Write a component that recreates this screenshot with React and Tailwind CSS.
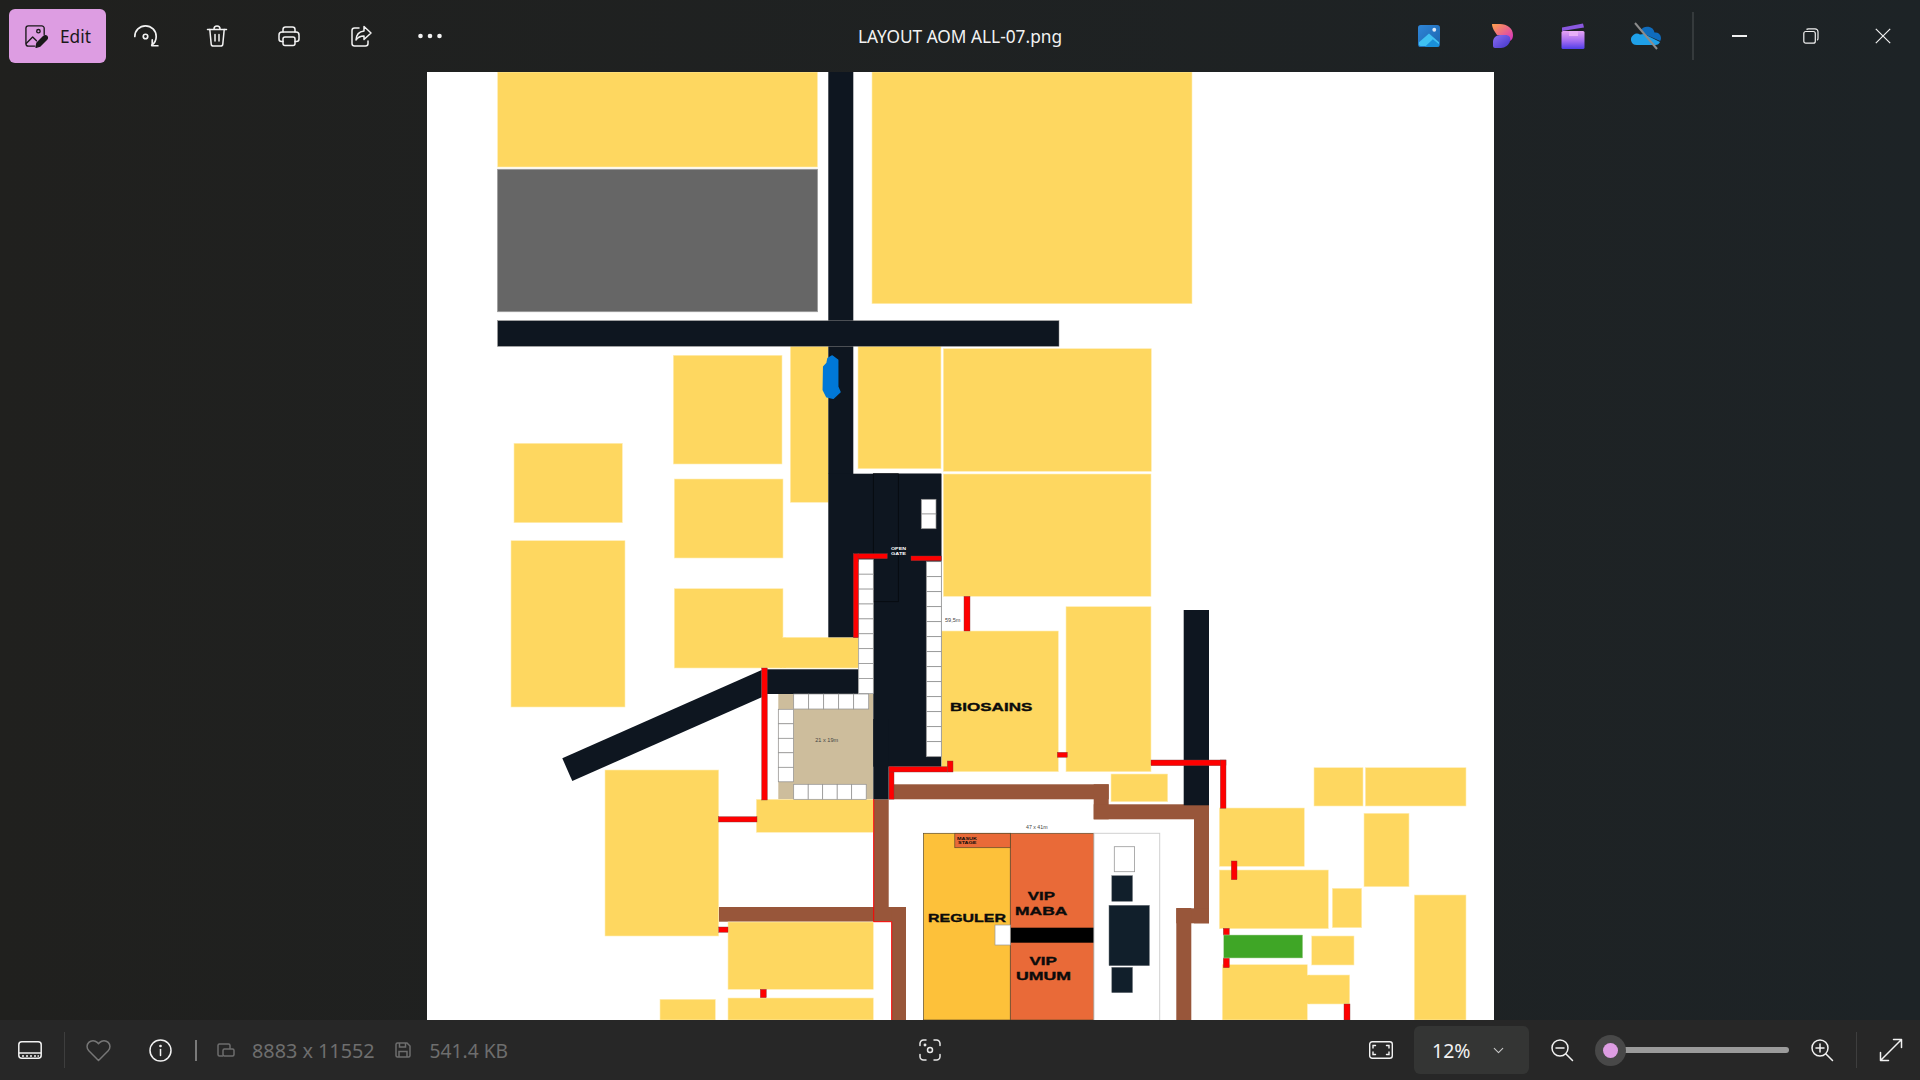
import { ChevronDown } from "lucide-react";

const font = { fontFamily: '"Noto Sans", "Open Sans", sans-serif' };

// floor plan shapes in screen pixels: [x1, y1, x2, y2]
const YELLOW = [
  [497.6, 72, 817.5, 167],
  [872, 72, 1192, 303.7],
  [673.3, 355.3, 782, 464],
  [790.3, 346, 828.3, 502.3],
  [858, 346, 941, 468.7],
  [943.3, 348.7, 1151.3, 471.3],
  [943.3, 474, 1151, 596.3],
  [514, 443.3, 622.3, 522.7],
  [511, 540.7, 625, 707],
  [674.3, 479, 783, 558],
  [674.3, 588.7, 783, 668],
  [783, 637.3, 858.3, 668],
  [756.3, 799.3, 873.7, 832.3],
  [605, 770, 718.7, 936],
  [728, 922, 873.3, 989.3],
  [728, 998, 873.3, 1020],
  [660, 999.3, 715.3, 1020],
  [941.7, 631, 1058.3, 771.7],
  [1066, 606.7, 1151, 771.7],
  [1111, 774, 1167.7, 801.7],
  [1314, 767.7, 1363, 806],
  [1365.3, 767.7, 1466, 806],
  [1364, 813.3, 1409, 886.7],
  [1219.3, 808, 1304.3, 866.3],
  [1219.3, 870, 1328.3, 928.7],
  [1332.3, 888.3, 1361.7, 927.7],
  [1414.3, 895, 1466, 1020],
  [1311.7, 936, 1354, 965],
  [1307.3, 975, 1349.7, 1004],
  [1222.3, 964.7, 1307.3, 1020],
];

// covers the light edge where two yellow blocks are really one
const SEAMS = [
  [780, 637.8, 786, 667.6],
  [1304, 975.4, 1310, 1003.6],
];

const BROWN = [
  [894, 784.3, 1108.7, 799.3],
  [1093.7, 784.3, 1108.7, 819.3],
  [1093.7, 804.3, 1209, 819.3],
  [1194, 805, 1209, 923.3],
  [1176.3, 908.3, 1209, 923.3],
  [1176.3, 908, 1191.3, 1020],
  [873.7, 799.3, 888.7, 907],
  [718.7, 907, 906, 921.7],
  [891.7, 907, 906, 1020],
];

const DARK = [
  [828.3, 72, 853.3, 474],
  [497.6, 320.7, 1059, 346.3],
  [828.3, 473.7, 858, 637.3],
  [858, 473.7, 941.3, 561.7],
  [873.3, 473.7, 941.3, 766.7],
  [873.3, 719, 888.7, 799.3],
  [766, 669.3, 858.3, 694],
  [1183.7, 610, 1209, 805.3],
];

const RED = [
  [853.3, 553.7, 858.3, 637.7],
  [858, 553.7, 887.3, 558.7],
  [911, 556, 941.3, 560.7],
  [761.7, 668, 767.3, 800],
  [718.3, 816.7, 757, 822],
  [718.7, 927, 728, 932.3],
  [760.3, 989.3, 766.3, 997.7],
  [964, 596.3, 970, 631],
  [1057.3, 752.3, 1067.3, 757.3],
  [1151, 760, 1226, 765.7],
  [1220.3, 760, 1226, 808.3],
  [889, 766.7, 894, 799.3],
  [889, 766.7, 947.3, 772],
  [947.3, 761, 953, 772],
  [1231.3, 861, 1237, 879.7],
  [1223.3, 928.3, 1229.3, 935],
  [1223.3, 958, 1229.3, 967.7],
  [1344, 1004, 1350, 1020],
];

// runs of small white booths
const CELLS = [
  { x: 858.7, y: 559.3, w: 14.6, h: 14.9, n: 9, down: true },
  { x: 926.3, y: 561.7, w: 15, h: 15, n: 13, down: true },
  { x: 921.3, y: 499.3, w: 14.7, h: 14.7, n: 2, down: true },
  { x: 793.7, y: 694, w: 15, h: 15, n: 5, down: false },
  { x: 778.3, y: 709.3, w: 15.2, h: 14.5, n: 5, down: true },
  { x: 793.7, y: 784.3, w: 14.5, h: 15, n: 5, down: false },
];

const Box = ({ r, ...rest }) => (
  <rect x={r[0]} y={r[1]} width={r[2] - r[0]} height={r[3] - r[1]} {...rest} />
);

const Label = ({ x, y, w, size, fill = "#0b0b0b", bold = true, children }) => (
  <text
    x={x}
    y={y}
    fontSize={size}
    fill={fill}
    textLength={w}
    lengthAdjust="spacingAndGlyphs"
    fontWeight={bold ? 700 : 400}
    stroke={bold && size > 5 ? fill : "none"}
    strokeWidth={bold && size > 5 ? 0.35 : 0}
    style={{ fontFamily: '"Liberation Sans", Arial, sans-serif' }}
  >
    {children}
  </text>
);

const FloorPlan = () => (
  <svg viewBox="427 72 1067 948" className="block h-[948px] w-[1067px] bg-white">
    {BROWN.map((r, i) => (
      <Box key={i} r={r} fill="#98563a" />
    ))}
    <Box r={[778.3, 694, 873.3, 799.3]} fill="#cdbd9c" />
    {YELLOW.map((r, i) => (
      <Box key={i} r={r} fill="#fed760" stroke="#ffedb5" strokeWidth="0.6" />
    ))}
    {SEAMS.map((r, i) => (
      <Box key={i} r={r} fill="#fed760" />
    ))}
    <Box r={[497.6, 169.3, 817.5, 311.7]} fill="#666666" stroke="#9a9a9a" strokeWidth="0.8" />
    {DARK.map((r, i) => (
      <Box key={i} r={r} fill="#0e1620" />
    ))}
    <polygon points="761.7,670 562.3,758.3 572.3,781 761.7,697.3" fill="#0e1620" />
    <Box r={[873.3, 473.7, 898.3, 601.7]} fill="none" stroke="#05080c" strokeWidth="0.7" />
    <Box r={[497.6, 320.7, 1059, 346.3]} fill="none" stroke="#8a8a8a" strokeWidth="0.5" />
    {CELLS.flatMap((c, i) =>
      Array.from({ length: c.n }, (_, j) => (
        <rect
          key={`${i}-${j}`}
          x={c.down ? c.x : c.x + j * c.w}
          y={c.down ? c.y + j * c.h : c.y}
          width={c.w}
          height={c.h}
          fill="#ffffff"
          stroke="#8f8f8f"
          strokeWidth="0.7"
        />
      ))
    )}
    {RED.map((r, i) => (
      <Box key={i} r={r} fill="#fe0000" stroke="#7d3a3a" strokeWidth="0.4" />
    ))}
    <path d="M873.7 799V921.7H891.7V1020" fill="none" stroke="#fe0000" strokeWidth="1" />

    <path
      d="M832.3 356 837.7 360 837.7 386.7 840 392 833.3 398.3 826.7 396.7 823.3 390 823.7 366.7 827 363.3 828 358.3Z"
      fill="#0078d7"
      stroke="#0078d7"
      strokeWidth="1.5"
      strokeLinejoin="round"
    />

    <Box r={[923.5, 833.3, 1010.3, 1020]} fill="#fdc13a" stroke="#5c4a2a" strokeWidth="0.7" />
    <Box r={[1010.3, 833.3, 1094, 1020]} fill="#e96a38" stroke="#5c4a2a" strokeWidth="0.7" />
    <Box r={[954.8, 833.3, 1010.3, 847.7]} fill="#e96a38" stroke="#5c4a2a" strokeWidth="0.7" />
    <Box r={[1010.3, 927.7, 1094, 942.7]} fill="#000000" />
    <Box r={[995, 925, 1010.3, 945]} fill="#ffffff" stroke="#999999" strokeWidth="0.7" />
    <Box r={[1094, 833.3, 1159.7, 1021]} fill="#ffffff" stroke="#d0d0d0" strokeWidth="1" />
    <Box r={[1114.3, 846.7, 1134.6, 871.7]} fill="#ffffff" stroke="#999999" strokeWidth="0.8" />
    <Box r={[1111.8, 875.7, 1132.5, 901.3]} fill="#111f2b" stroke="#6d7378" strokeWidth="0.5" />
    <Box r={[1109, 905.3, 1149.4, 965.7]} fill="#111f2b" stroke="#6d7378" strokeWidth="0.5" />
    <Box r={[1111.8, 967.3, 1132.5, 992.7]} fill="#111f2b" stroke="#6d7378" strokeWidth="0.5" />
    <Box r={[1223.7, 935, 1302.7, 958]} fill="#3fa626" stroke="#b5d8a8" strokeWidth="0.5" />

    <Label x={950} y={711.3} w={82.3} size={11.5}>BIOSAINS</Label>
    <Label x={928} y={921.7} w={78} size={11.5}>REGULER</Label>
    <Label x={1027.8} y={900.3} w={27.2} size={11.5}>VIP</Label>
    <Label x={1015} y={915} w={52.4} size={11.5}>MABA</Label>
    <Label x={1029.5} y={965.3} w={27.5} size={11.5}>VIP</Label>
    <Label x={1016} y={980} w={55} size={11.5}>UMUM</Label>
    <Label x={957} y={839.5} w={20} size={4.2}>MASUK</Label>
    <Label x={958} y={844.2} w={18.5} size={4.2}>STAGE</Label>
    <Label x={891} y={550} w={15} size={4} fill="#ffffff">OPEN</Label>
    <Label x={891} y={554.8} w={15} size={4} fill="#ffffff">GATE</Label>
    <Label x={945} y={622} w={15.5} size={6} fill="#444444" bold={false}>59,5m</Label>
    <Label x={815.2} y={742} w={23} size={6} fill="#444444" bold={false}>21 x 19m</Label>
    <Label x={1026} y={829.3} w={21.5} size={5.5} fill="#444444" bold={false}>47 x 41m</Label>
  </svg>
);

const Stroke = ({ size = 24, className = "", children }) => (
  <svg
    width={size}
    height={size}
    viewBox="0 0 24 24"
    fill="none"
    stroke="currentColor"
    strokeWidth="1.5"
    strokeLinecap="round"
    strokeLinejoin="round"
    className={className}
  >
    {children}
  </svg>
);

const TopButton = ({ children }) => (
  <div className="flex h-[54px] w-[58px] items-center justify-center text-[#f2f2f2]">{children}</div>
);

const WinButton = ({ children }) => (
  <div className="flex h-[48px] w-[72px] items-center justify-center">{children}</div>
);

const Toolbar = () => (
  <header className="grid h-[72px] shrink-0 grid-cols-[1fr_auto_1fr] items-center">
    <div className="flex items-center">
      <div className="ml-[9px] flex h-[54px] w-[97px] items-center rounded-[6px] bg-[#dd9de2] pl-[15px] text-[#191919]">
        <svg width="25" height="25" viewBox="0 0 26 26" fill="none" stroke="currentColor" strokeWidth="1.4" strokeLinejoin="round" strokeLinecap="round">
          <path d="M11 23H4.5A2.5 2.500 0 0 1 2 20.500v-16A2.500 2.500 0 0 1 4.500 2h14A2.500 2.500 0 0 1 21 4.500V11" />
          <path d="M2.500 20 9 13.500l4 4" />
          <circle cx="15" cy="7.500" r="1.800" />
          <path d="M12.500 24.200l1-4.500 7-7a2.200 2.200 0 0 1 3.200 3.200l-7 7z" fill="currentColor" />
        </svg>
        <span style={font} className="ml-[11px] pt-[2px] text-[17.3px]">Edit</span>
      </div>
      <div className="ml-[10px] flex items-center gap-[14px]">
        <TopButton>
          <Stroke size={27}>
            <path d="M2.500 12a9.500 9.500 0 0 1 19 0 9.500 9.500 0 0 1-4 7.800" />
            <path d="M18 15v5.200h5" />
            <circle cx="12" cy="12" r="2" />
          </Stroke>
        </TopButton>
        <TopButton>
          <Stroke>
            <path d="M2.500 5.500h19" />
            <path d="M9 5a3 3 0 0 1 6 0" />
            <path d="M4.800 5.500l1.400 14.600a2.200 2.200 0 0 0 2.200 2h7.200a2.200 2.200 0 0 0 2.200-2l1.400-14.600" />
            <path d="M10 10.500v6.500M14 10.500v6.500" />
          </Stroke>
        </TopButton>
        <TopButton>
          <Stroke>
            <path d="M6 8V5.500A2.500 2.500 0 0 1 8.500 3h7A2.500 2.500 0 0 1 18 5.500V8" />
            <path d="M6 17.500H4.500A2.500 2.500 0 0 1 2 15v-4a3 3 0 0 1 3-3h14a3 3 0 0 1 3 3v4a2.500 2.500 0 0 1-2.500 2.500H18" />
            <rect x="6" y="13" width="12" height="8.500" rx="2" />
          </Stroke>
        </TopButton>
        <TopButton>
          <Stroke>
            <path d="M10 4H5.500A2.500 2.500 0 0 0 3 6.500v13A2.500 2.500 0 0 0 5.500 22h11a2.500 2.500 0 0 0 2.500-2.500V17" />
            <path d="M15 2.500l7 6.500-7 6.500V12c-3.500 0-6 1-8 4 .3-5 3-8.500 8-9z" />
          </Stroke>
        </TopButton>
        <TopButton>
          <svg width="28" height="6" viewBox="0 0 28 6" fill="currentColor" className="mr-[6px]">
            <circle cx="4.500" cy="3" r="2.300" />
            <circle cx="14" cy="3" r="2.300" />
            <circle cx="23.500" cy="3" r="2.300" />
          </svg>
        </TopButton>
      </div>
    </div>
    <span style={font} className="pt-[2px] text-[17.3px] text-[#f2f2f2]">LAYOUT AOM ALL-07.png</span>
    <div className="flex items-center justify-end pr-px">
      <WinButton>
        <svg width="22" height="22" viewBox="0 0 23 23" className="ml-[1px]">
          <defs>
            <linearGradient id="ph" x1="0" y1="0" x2="1" y2="1">
              <stop offset="0" stopColor="#2f86d8" />
              <stop offset="1" stopColor="#1b64ad" />
            </linearGradient>
          </defs>
          <rect width="23" height="23" rx="3" fill="url(#ph)" />
          <circle cx="17" cy="5" r="2" fill="#dfe9f5" />
          <path d="M1 18 11.500 9 22 18v2a2 2 0 0 1-2 2H3a2 2 0 0 1-2-2z" fill="#3fc1f2" />
          <path d="M7 23l8.500-8L22 20v1a2 2 0 0 1-2 2z" fill="#1a8fd9" />
        </svg>
      </WinButton>
      <WinButton>
        <svg width="22" height="26" viewBox="0 0 22 26" className="ml-[6px]">
          <defs>
            <linearGradient id="d1" x1="0" y1="0" x2="1" y2="1">
              <stop offset="0" stopColor="#ffa14a" />
              <stop offset="1" stopColor="#d42fc4" />
            </linearGradient>
            <linearGradient id="d2" x1="0" y1="0" x2="1" y2="1">
              <stop offset="0" stopColor="#8a6cf0" />
              <stop offset="1" stopColor="#4236c9" />
            </linearGradient>
          </defs>
          <path d="M0 1h8c7 0 13 4 13 11 0 3-1 5-3 6 1-4-3-6-8-6H5C3 9 0 5 0 1z" fill="url(#d1)" />
          <path d="M1 19c0-4 3-7 7-7h5c4 0 6 2 5 6-1 4-5 7-9 7H3c-1 0-2-1-2-2z" fill="url(#d2)" />
        </svg>
      </WinButton>
      <WinButton>
        <svg width="24" height="26" viewBox="0 0 24 26" className="ml-[2px]">
          <defs>
            <linearGradient id="c1" x1="0" y1="0" x2="0" y2="1">
              <stop offset="0" stopColor="#e7a4f5" />
              <stop offset="0.55" stopColor="#a46cf0" />
              <stop offset="1" stopColor="#4f3ee8" />
            </linearGradient>
          </defs>
          <path d="M1 4.500 22 .5l1 4-22 3.500z" fill="#8a58e0" />
          <rect x="0.500" y="8" width="23" height="18" rx="1.500" fill="url(#c1)" />
          <rect x="8" y="8" width="9" height="5" fill="#e8b0f8" />
        </svg>
      </WinButton>
      <WinButton>
        <svg width="32" height="28" viewBox="0 0 32 28" className="ml-[3px]">
          <path d="M11 8a7.500 7.500 0 0 1 13.500 2.500A5.500 5.500 0 0 1 31 16c0 1-.3 2-.8 3L14 12z" fill="#0f6cbd" />
          <path d="M1 18.500A6 6 0 0 1 10 12.500L14 12l16 8a5 5 0 0 1-4.500 3H7a6 6 0 0 1-6-4.500z" fill="#1fa0e8" />
          <path d="M5 1l22 26" stroke="#8c8c8c" strokeWidth="2" />
        </svg>
      </WinButton>
      <div className="ml-3 mr-[9px] h-[48px] w-[2px] bg-[#353a3c]" />
      <WinButton>
        <div className="h-[1.5px] w-[15px] bg-[#f0f0f0]" />
      </WinButton>
      <WinButton>
        <svg width="16" height="16" viewBox="0 0 16 16" fill="none" stroke="#f0f0f0" strokeWidth="1.200">
          <rect x="0.800" y="3.500" width="11.500" height="11.700" rx="2" />
          <path d="M3.500 1.500C4 .9 4.500.8 5.500.8h6.500a3 3 0 0 1 3 3v6.500c0 1-.2 1.500-.8 2" />
        </svg>
      </WinButton>
      <WinButton>
        <svg width="16" height="16" viewBox="0 0 16 16" stroke="#f0f0f0" strokeWidth="1.200">
          <path d="M.8.8l14.400 14.400M15.200.8.800 15.200" />
        </svg>
      </WinButton>
    </div>
  </header>
);

const StatusBar = () => (
  <footer className="flex h-[60px] shrink-0 items-center bg-[#272727]">
    <div className="flex w-[919px] items-center text-[#f2f2f2]">
      <div className="flex w-[60px] justify-center">
        <svg width="24" height="18" viewBox="0 0 24 18" fill="none" stroke="currentColor" strokeWidth="1.500">
          <rect x="0.800" y="0.800" width="22.400" height="16.400" rx="3" />
          <path d="M1 12h22" />
          <path d="M4 15h2M8 15h2M12 15h2M16 15h2M19.500 15h1.500" strokeWidth="1.700" />
        </svg>
      </div>
      <div className="ml-[4px] h-[36px] w-px bg-[#3e3e3e]" />
      <div className="flex w-[66px] justify-center text-[#767676]">
        <svg width="25" height="23" viewBox="0 0 25 23" fill="none" stroke="currentColor" strokeWidth="1.500" strokeLinejoin="round">
          <path d="M12.500 21.500 2.800 11.800a5.900 5.900 0 0 1 8.400-8.400l1.300 1.300 1.300-1.300a5.900 5.900 0 0 1 8.400 8.400z" />
        </svg>
      </div>
      <div className="flex w-[58px] justify-center">
        <svg width="23" height="23" viewBox="0 0 23 23" fill="none" stroke="currentColor" strokeWidth="1.500" strokeLinecap="round">
          <circle cx="11.500" cy="11.500" r="10.500" />
          <path d="M11.500 10.500v6" />
          <circle cx="11.500" cy="7" r="0.600" />
        </svg>
      </div>
      <div className="ml-[6px] h-[21px] w-[2px] bg-[#7a7a7a]" />
      <div className="ml-[20px] text-[#6e6e6e]">
        <svg width="18" height="14" viewBox="0 0 18 14" fill="none" stroke="currentColor" strokeWidth="1.500" className="block">
          <path d="M6 13H2.500A1.500 1.500 0 0 1 1 11.500v-9A1.500 1.500 0 0 1 2.500 1h9A1.500 1.500 0 0 1 13 2.500V6" />
          <rect x="6" y="6" width="11" height="7" rx="1.500" />
        </svg>
      </div>
      <span style={font} className="ml-[17px] pt-[2px] text-[19.8px] text-[#6e6e6e]">8883 x 11552</span>
      <div className="ml-[20px] text-[#6e6e6e]">
        <svg width="16" height="16" viewBox="0 0 16 16" fill="none" stroke="currentColor" strokeWidth="1.500" className="block">
          <path d="M1 2.500A1.500 1.500 0 0 1 2.500 1h9.500l3 3v9.500a1.500 1.500 0 0 1-1.500 1.500h-11A1.500 1.500 0 0 1 1 13.500z" />
          <path d="M4.500 1v4h6V1M4 15V9.500h8V15" />
        </svg>
      </div>
      <span style={font} className="ml-[19px] pt-[2px] text-[19.2px] text-[#6e6e6e]">541.4 KB</span>
    </div>
    <div className="text-[#e8e8e8]">
      <svg width="22" height="22" viewBox="0 0 22 22" fill="none" stroke="currentColor" strokeWidth="1.500" strokeLinecap="round" className="block">
        <path d="M1 6.500V4.500A3.500 3.500 0 0 1 4.500 1H7M15 1h2.500A3.500 3.500 0 0 1 21 4.500v2M21 15.500v2a3.500 3.500 0 0 1-3.500 3.500H15M7 21H4.500A3.500 3.500 0 0 1 1 17.500v-2" />
        <circle cx="11" cy="11" r="2.500" />
        <circle cx="6" cy="6" r="0.700" />
      </svg>
    </div>
    <div className="ml-[428px] flex items-center text-[#f2f2f2]">
      <svg width="24" height="18" viewBox="0 0 24 18" fill="none" stroke="currentColor" strokeWidth="1.400" strokeLinecap="round">
        <rect x="0.700" y="0.700" width="22.600" height="16.600" rx="2.500" />
        <path d="M4 7V4.500h2.500M17.500 4.500H20V7M20 11v2.500h-2.500M6.500 13.500H4V11" />
      </svg>
      <div className="ml-[21px] flex h-[48px] w-[115px] items-center rounded-[6px] bg-[#343534] pl-[18px]">
        <span style={font} className="w-[58px] pt-[1px] text-[19.5px]">12%</span>
        <ChevronDown size={17} strokeWidth={1.500} className="text-[#c8c8c8]" />
      </div>
      <div className="ml-[21px]">
        <Stroke size={24} className="block">
          <circle cx="10" cy="10" r="8" />
          <path d="M6 10h8M16 16l6.500 6.500" />
        </Stroke>
      </div>
      <div className="relative ml-[20px] flex h-[32px] w-[195px] items-center">
        <div className="ml-[8px] h-[6px] flex-1 rounded-full bg-[#9b9b9b]" />
        <div className="absolute left-[0.5px] top-[0.5px] flex h-[31px] w-[31px] items-center justify-center rounded-full bg-[#484848]">
          <div className="h-[15px] w-[15px] rounded-full bg-[#dd9de2]" />
        </div>
      </div>
      <div className="ml-[21px]">
        <Stroke size={24} className="block">
          <circle cx="10" cy="10" r="8" />
          <path d="M6 10h8M10 6v8M16 16l6.500 6.500" />
        </Stroke>
      </div>
      <div className="ml-[22px] h-[36px] w-px bg-[#3e3e3e]" />
      <div className="ml-[22px]">
        <Stroke size={24} className="block">
          <path d="M1.500 22.500l21-21M14.500 1.500h8v8M1.500 14.500v8h8" />
        </Stroke>
      </div>
    </div>
  </footer>
);

export default function App() {
  return (
    <div className="flex h-screen w-screen flex-col overflow-hidden bg-gradient-to-r from-[#20201e] to-[#1d2326]">
      <Toolbar />
      <main className="flex min-h-0 flex-1 justify-center pl-px">
        <FloorPlan />
      </main>
      <StatusBar />
    </div>
  );
}
